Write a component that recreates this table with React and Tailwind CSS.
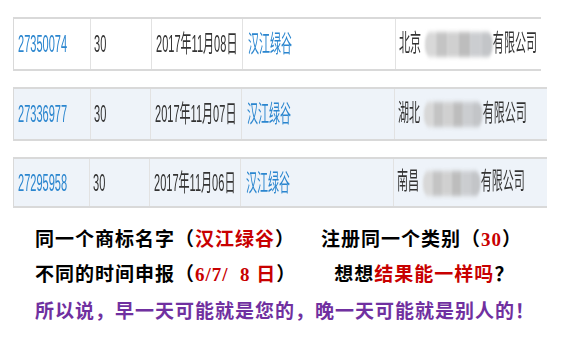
import React from 'react';

const rows = [
  { no: '27350074', cls: '30', date: '2017年11月08日', mark: '汉江绿谷', city: '北京', blur: 'w-[148px]', bg: 'bg-white', width: 'w-[528px]', cols: ['w-[77px]', 'w-[61px]', 'w-[91px]', 'w-[153px]'], h: 'h-[54px]' },
  { no: '27336977', cls: '30', date: '2017年11月07日', mark: '汉江绿谷', city: '湖北', blur: 'w-[128px]', bg: 'bg-[#eef3f9]', width: 'w-[534px]', cols: ['w-[77px]', 'w-[60px]', 'w-[91px]', 'w-[153px]'], h: 'h-[54px]' },
  { no: '27295958', cls: '30', date: '2017年11月06日', mark: '汉江绿谷', city: '南昌', blur: 'w-[126px]', bg: 'bg-[#eef3f9]', width: 'w-[534px]', cols: ['w-[76px]', 'w-[60px]', 'w-[91px]', 'w-[153px]'], h: 'h-[51px]' },
];

// the screenshot is squeezed sideways, so each cell's text is squeezed too
function Squeezed({ className = '', children }) {
  return (
    <span className={`inline-block origin-left scale-x-[0.46] whitespace-nowrap text-[24px] leading-none ${className}`}>
      {children}
    </span>
  );
}

function Blurred({ width }) {
  return (
    <span className={`inline-flex h-[25px] ${width} align-middle rounded-[12px] overflow-hidden blur-[2px]`}>
      <span className="flex-1 bg-[#d8d8d8]" />
      <span className="flex-1 bg-[#c4c4c4]" />
      <span className="flex-1 bg-[#d0d0d0]" />
      <span className="flex-1 bg-[#bdbdbd]" />
      <span className="flex-1 bg-[#cbcdd0]" />
      <span className="flex-1 bg-[#c3c5c8]" />
    </span>
  );
}

function Row({ row }) {
  const cell = 'flex items-center shrink-0 border-r border-[#e2e2e2] h-full overflow-hidden';
  return (
    <div className={`flex ${row.width} ${row.h} ${row.bg} border-y-2 border-l border-[#d9d9d9]`}>
      <div className={`${cell} ${row.cols[0]} pl-[4px]`}>
        <Squeezed className="text-[#2b86cf]">{row.no}</Squeezed>
      </div>
      <div className={`${cell} ${row.cols[1]} pl-[3px]`}>
        <Squeezed className="text-[#333]">{row.cls}</Squeezed>
      </div>
      <div className={`${cell} ${row.cols[2]} pl-[4px]`}>
        <Squeezed className="text-[#333]">{row.date}</Squeezed>
      </div>
      <div className={`${cell} ${row.cols[3]} pl-[5px]`}>
        <Squeezed className="text-[#2b86cf]">{row.mark}</Squeezed>
      </div>
      <div className="flex items-center flex-1 min-w-0 overflow-hidden pl-[3px] h-full">
        <Squeezed className="text-[#333]">
          {row.city}
          <span className="inline-block w-[8px]" />
          <Blurred width={row.blur} />
          有限公司
        </Squeezed>
      </div>
    </div>
  );
}

export default function App() {
  const font = { fontFamily: '"Liberation Serif", "Noto Sans CJK SC", serif' };
  return (
    <div className="w-[561px] h-[345px] bg-white overflow-hidden" style={{ fontFamily: '"Liberation Sans", "Noto Sans CJK SC", sans-serif' }}>
      <div className="pt-[17px] pl-[13px] flex flex-col gap-[16px]">
        {rows.map((r) => (
          <Row key={r.no} row={r} />
        ))}
      </div>

      <div className="mt-[14px] pl-[35px] text-[19px] tracking-[1px] font-semibold leading-[35px]" style={font}>
        <div className="flex whitespace-pre text-black">
          <span>同一个商标名字（</span>
          <span className="text-[#c80000]">汉江绿谷</span>
          <span>）</span>
          <span className="ml-[26px]">注册同一个类别（</span>
          <span className="text-[#c80000] font-bold">30</span>
          <span>）</span>
        </div>
        <div className="flex whitespace-pre text-black">
          <span>不同的时间申报（</span>
          <span className="text-[#c80000] font-bold">6/7/  8 日</span>
          <span>）</span>
          <span className="ml-[38px]">想想</span>
          <span className="text-[#c80000]">结果能一样吗</span>
          <span>？</span>
        </div>
        <div className="text-[#7030a0] font-bold" style={{ fontFamily: '"Noto Sans CJK SC", sans-serif' }}>
          所以说，早一天可能就是您的，晚一天可能就是别人的！
        </div>
      </div>
    </div>
  );
}
